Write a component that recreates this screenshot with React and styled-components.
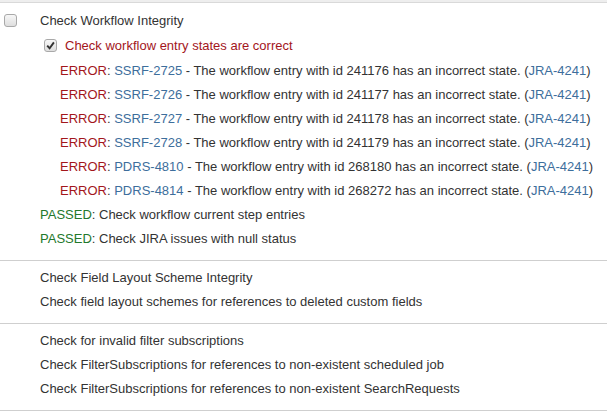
import React from 'react';
import styled, { createGlobalStyle } from 'styled-components';

const Global = createGlobalStyle`
body{
    margin: 0;
    background: #fff;
    font-family: "Liberation Sans", Arial, sans-serif;
    font-size: 13px;
    color: #333;
}
`

const TopStrip = styled.div`
height: 2px;
background: #eeeeee;
border-bottom: 1px solid #d9d9d9;
`
const Section = styled.div`
padding: 4px 0 10px;
border-bottom: 1px solid #cfcfcf;
`
const Row = styled.div`
display: flex;
align-items: center;
height: ${props => props.h || 24}px;
padding-left: ${props => props.indent || 40}px;
white-space: nowrap;
`
const CheckCol = styled.div`
width: 40px;
margin-left: -40px;
padding-left: 4px;
box-sizing: border-box;
display: flex;
align-items: center;
`
const Box = styled.span`
display: inline-flex;
align-items: center;
justify-content: center;
width: 13px;
height: 13px;
box-sizing: border-box;
border: 1px solid #a9a9a9;
border-radius: 3px;
background: linear-gradient(#f7f7f7, #dedede);
margin-right: ${props => props.gap || 0}px;
flex: none;
`
const Fail = styled.span`
color: #a3161c;
`
const Pass = styled.span`
color: #23782b;
`
const Link = styled.a`
color: #3d6e9c;
text-decoration: none;
`

const Checkbox = ({ checked, gap }) => (
    <Box gap={gap}>
        {checked && (
            <svg width="9" height="9" viewBox="0 0 9 9">
                <path d="M1.2 4.6 L3.6 7.2 L7.9 1.4" fill="none" stroke="#333" strokeWidth="1.9" />
            </svg>
        )}
    </Box>
)

const errors = [
    ['SSRF-2725', '241176'],
    ['SSRF-2726', '241177'],
    ['SSRF-2727', '241178'],
    ['SSRF-2728', '241179'],
    ['PDRS-4810', '268180'],
    ['PDRS-4814', '268272'],
]

const ErrorRow = ({ issue, id }) => (
    <Row indent={60}>
        <Fail>ERROR</Fail>:&nbsp;<Link href="#">{issue}</Link>&nbsp;- The workflow entry with id {id} has an incorrect state. (<Link href="#">JRA-4241</Link>)
    </Row>
)

const App = () => {
    return (
        <>
            <Global />
            <TopStrip />
            <Section>
                <Row h={26}>
                    <CheckCol><Checkbox /></CheckCol>
                    Check Workflow Integrity
                </Row>
                <Row h={25} indent={44}>
                    <Checkbox checked gap={8} />
                    <Fail>Check workflow entry states are correct</Fail>
                </Row>
                {errors.map(([issue, id]) => <ErrorRow key={issue} issue={issue} id={id} />)}
                <Row><Pass>PASSED</Pass>:&nbsp;Check workflow current step entries</Row>
                <Row><Pass>PASSED</Pass>:&nbsp;Check JIRA issues with null status</Row>
            </Section>
            <Section>
                <Row>Check Field Layout Scheme Integrity</Row>
                <Row>Check field layout schemes for references to deleted custom fields</Row>
            </Section>
            <Section>
                <Row>Check for invalid filter subscriptions</Row>
                <Row>Check FilterSubscriptions for references to non-existent scheduled job</Row>
                <Row>Check FilterSubscriptions for references to non-existent SearchRequests</Row>
            </Section>
        </>
    )
}

export default App;
